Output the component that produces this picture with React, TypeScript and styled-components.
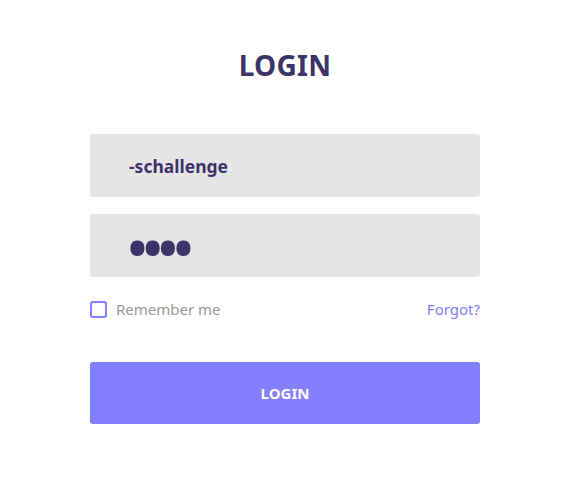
import React from "react";
import styled, { createGlobalStyle } from "styled-components";

const Global = createGlobalStyle`
  html, body { margin: 0; padding: 0; background: #fff; }
  body { font-family: "Noto Sans", "Open Sans", sans-serif; }
  * { box-sizing: border-box; }
`;

const Page = styled.div`
  width: 568px;
  height: 502px;
  display: flex;
  justify-content: center;
  padding-top: 46px;
  padding-left: 2px;
`;

const Form = styled.form`
  width: 390px;
  display: flex;
  flex-direction: column;
`;

const Title = styled.h1`
  margin: 0 0 50px;
  text-align: center;
  font-size: 28px;
  line-height: 38px;
  font-weight: 700;
  color: #3d3368;
  letter-spacing: 0.3px;
`;

const Field = styled.input<{ $dots?: boolean }>`
  width: 100%;
  height: 63px;
  border: none;
  outline: none;
  border-radius: 3px;
  background: #e5e5e5;
  padding: ${(p) => (p.$dots ? "5px 0 0 38px" : "0 0 0 39px")};
  margin-bottom: 17px;
  color: #3d3368;
  font-family: "Noto Sans", "Open Sans", sans-serif;
  font-weight: 700;
  font-size: ${(p) => (p.$dots ? "50px" : "17.5px")};
  letter-spacing: ${(p) => (p.$dots ? "-3.5px" : "0")};
`;

const Row = styled.div`
  display: flex;
  justify-content: space-between;
  align-items: center;
  margin-top: 3px;
  height: 24px;
`;

const CheckLabel = styled.label`
  display: flex;
  align-items: center;
  gap: 9px;
  color: #999;
  font-size: 15px;
`;

const Box = styled.span`
  width: 17px;
  height: 17px;
  border: 2px solid #8280ff;
  border-radius: 3px;
  display: inline-block;
`;

const Forgot = styled.a`
  color: #8280ff;
  font-size: 15px;
  text-decoration: none;
`;

const Button = styled.button`
  margin-top: 41px;
  height: 62px;
  width: 100%;
  border: none;
  border-radius: 3px;
  background: #8280ff;
  color: #fff;
  font-family: "Noto Sans", "Open Sans", sans-serif;
  font-weight: 700;
  font-size: 15px;
`;

export default function App() {
  return (
    <>
      <Global />
      <Page>
        <Form onSubmit={(e) => e.preventDefault()}>
          <Title>LOGIN</Title>
          <Field type="text" defaultValue="-schallenge" />
          <Field type="password" defaultValue="1234" $dots />
          <Row>
            <CheckLabel>
              <Box />
              Remember me
            </CheckLabel>
            <Forgot href="#">Forgot?</Forgot>
          </Row>
          <Button type="submit">LOGIN</Button>
        </Form>
      </Page>
    </>
  );
}
